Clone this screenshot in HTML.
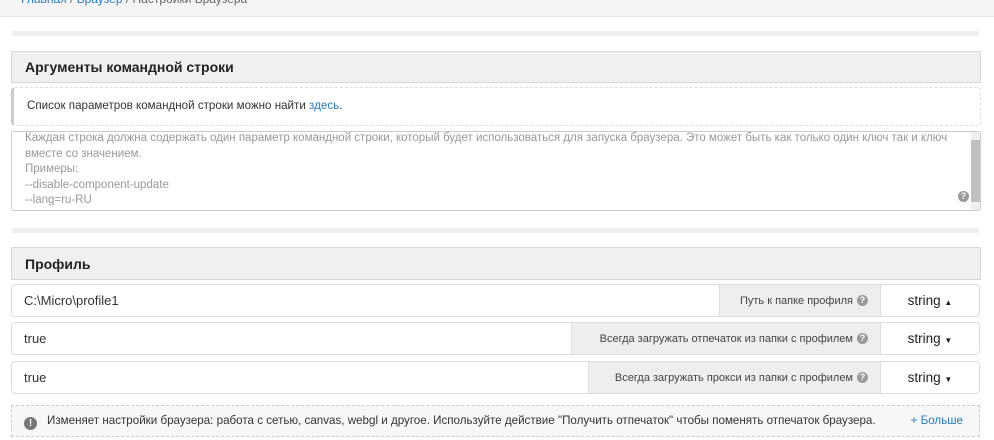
<!DOCTYPE html>
<html><head><meta charset="utf-8"><style>
*{box-sizing:border-box;margin:0;padding:0}
body{width:994px;height:440px;overflow:hidden;background:#fff;font-family:"Liberation Sans",Arial,sans-serif;font-size:12px;color:#333;position:relative}
.a{position:absolute}
.top{left:0;top:0;width:994px;height:17px;background:#f5f5f5;border-bottom:1px solid #e3e3e3}
.bar{background:#eee;height:5px}
.hdr{background:#f0f0f0;border:1px solid #d8d8d8;font-weight:bold;font-size:14px;color:#222;padding-left:13px;line-height:31px}
.row{left:11px;width:969px;height:33px;border:1px solid #ddd;border-radius:4px;overflow:hidden}
.row .v{position:absolute;left:12px;top:0;line-height:31px;font-size:13px;color:#333}
.row .l{position:absolute;top:0;bottom:0;right:98px;background:#eee;border-left:1px solid #ddd;border-right:1px solid #ddd;font-size:11px;color:#444;padding:0 12px 0 13px;display:flex;align-items:center;justify-content:flex-end;white-space:nowrap}
.row .t{position:absolute;right:0;top:0;width:98px;line-height:31px;text-align:center;font-size:13.5px;color:#222}
.q{display:inline-block;width:11px;height:11px;border-radius:50%;background:#999;color:#fff;font-size:9px;line-height:11px;text-align:center;font-weight:bold;margin-left:4px}
</style></head><body>
<div class="a top"><span class="a" style="left:21px;top:-8px;font-size:12px;color:#666"><span style="color:#2a7bc0">Главная</span> / <span style="color:#2a7bc0">Браузер</span> / Настройки Браузера</span></div>
<div class="a bar" style="left:12px;top:31px;width:967px"></div>
<div class="a hdr" style="left:11px;top:51px;width:970px;height:32px">Аргументы командной строки</div>
<div class="a" style="left:11px;top:87px;width:970px;height:39px;border:1px dashed #ddd;border-left:3px solid #ccc;border-radius:4px;padding-left:13px;line-height:36px;font-size:11.6px;color:#333">Список параметров командной строки можно найти <span style="color:#2a7bc0">здесь</span>.</div>
<div class="a" style="left:11px;top:131px;width:970px;height:80px;border:1px solid #ccc;border-radius:3px;overflow:hidden">
<div style="padding:0 20px 0 13px;font-size:11.5px;line-height:15.6px;color:#999;margin-top:-1px">Каждая строка должна содержать один параметр командной строки, который будет использоваться для запуска браузера. Это может быть как только один ключ так и ключ вместе со значением.<br>Примеры:<br>--disable-component-update<br>--lang=ru-RU</div>
<div class="a" style="right:0;top:0;width:9px;height:78px;background:#f0f0f0"><div style="margin-top:8px;height:62px;background:#c1c1c1"></div></div>
<span class="a q" style="right:11px;top:59px">?</span>
</div>
<div class="a bar" style="left:12px;top:228px;width:967px"></div>
<div class="a hdr" style="left:11px;top:247px;width:970px;height:33px;line-height:33px">Профиль</div>
<div class="a row" style="top:284px"><span class="v">C:\Micro\profile1</span><span class="l" style="left:707px">Путь к папке профиля <span class="q">?</span></span><span class="t">string <span style="font-size:8px">▲</span></span></div>
<div class="a row" style="top:322px"><span class="v">true</span><span class="l" style="left:559px">Всегда загружать отпечаток из папки с профилем <span class="q">?</span></span><span class="t">string <span style="font-size:8px">▼</span></span></div>
<div class="a row" style="top:361px"><span class="v">true</span><span class="l" style="left:576px">Всегда загружать прокси из папки с профилем <span class="q">?</span></span><span class="t">string <span style="font-size:8px">▼</span></span></div>
<div class="a" style="left:11px;top:405px;width:969px;height:32px;background:#f7f7f7;border:1px dashed #ccc;line-height:30px;font-size:11.6px;color:#333;padding-left:12px;white-space:nowrap"><span style="display:inline-block;width:13px;height:13px;border-radius:50%;background:#777;color:#fff;font-size:10px;line-height:13px;text-align:center;font-weight:bold;vertical-align:-2px;margin-right:10px">!</span>Изменяет настройки браузера: работа с сетью, canvas, webgl и другое. Используйте действие "Получить отпечаток" чтобы поменять отпечаток браузера.<span class="a" style="right:16px;top:0;color:#2a7bc0">+ Больше</span></div>
</body></html>
